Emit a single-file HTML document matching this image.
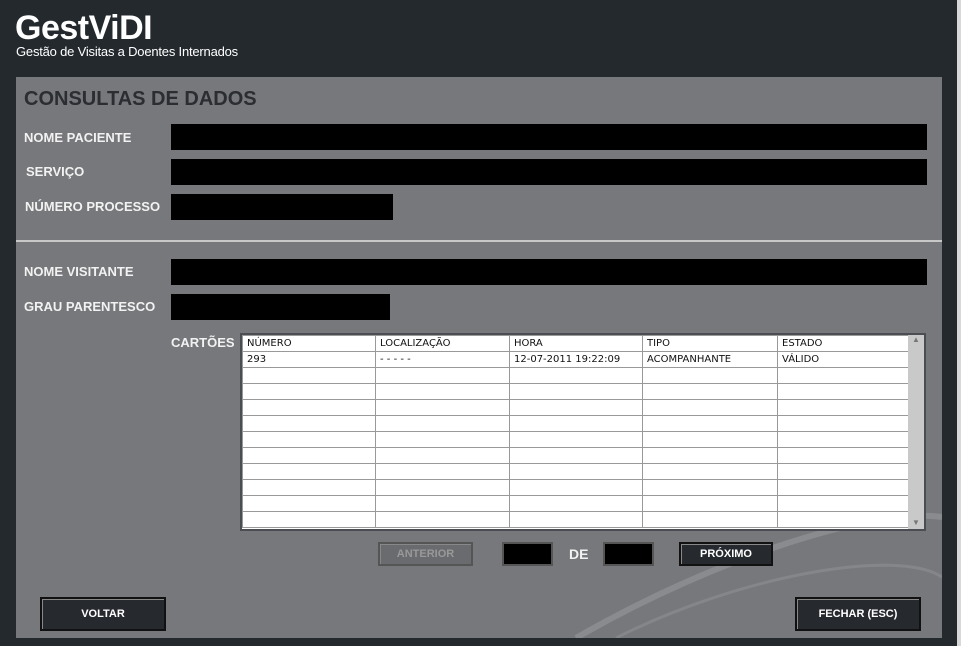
<!DOCTYPE html><html><head><meta charset="utf-8"><style>
body{margin:0;width:961px;height:646px;background:#24292e;font-family:"Liberation Sans",sans-serif;position:relative;overflow:hidden}
.a{position:absolute}
.lbl{position:absolute;color:#f2f2f2;font-weight:bold;font-size:13px}
.blk{position:absolute;background:#000}
.btn{position:absolute;background:#262a2f;border:2px solid #111;box-shadow:inset 1px 1px 0 #888;color:#fff;font-weight:bold;font-size:11px;text-align:center;box-sizing:border-box}
table{border-collapse:collapse;font-size:10px;font-family:"DejaVu Sans",sans-serif;}
td{border:1px solid #999;height:15px;padding:0 0 0 4px;line-height:14px;color:#111;white-space:nowrap}
</style></head><body>
<div class="a" style="left:15px;top:9px;color:#fff;font-weight:bold;font-size:34px;letter-spacing:-0.5px">GestViDI</div>
<div class="a" style="left:16px;top:44px;color:#fff;font-size:13px;letter-spacing:-0.2px">Gestão de Visitas a Doentes Internados</div>
<div class="a" style="left:16px;top:77px;width:926px;height:561px;background:#77787b;overflow:hidden">
<svg class="a" style="left:0;top:0" width="926" height="561"><path d="M560 561 C700 480 860 430 926 440" stroke="#8a8b8e" stroke-width="6" fill="none"/><path d="M600 561 C720 500 880 470 926 500" stroke="#858689" stroke-width="3" fill="none"/></svg>
</div>
<div class="a" style="left:24px;top:88px;color:#2a2d32;font-weight:bold;font-size:20px">CONSULTAS DE DADOS</div>
<div class="lbl" style="left:24px;top:130px">NOME PACIENTE</div>
<div class="blk" style="left:171px;top:124px;width:756px;height:26px"></div>
<div class="lbl" style="left:26px;top:164px">SERVIÇO</div>
<div class="blk" style="left:171px;top:159px;width:756px;height:26px"></div>
<div class="lbl" style="left:25px;top:199px">NÚMERO PROCESSO</div>
<div class="blk" style="left:171px;top:194px;width:222px;height:26px"></div>
<div class="a" style="left:16px;top:240px;width:926px;height:2px;background:#c8c8c8"></div>
<div class="lbl" style="left:24px;top:264px">NOME VISITANTE</div>
<div class="blk" style="left:171px;top:259px;width:756px;height:26px"></div>
<div class="lbl" style="left:24px;top:299px">GRAU PARENTESCO</div>
<div class="blk" style="left:171px;top:294px;width:219px;height:26px"></div>
<div class="lbl" style="left:171px;top:335px">CARTÕES</div>
<div class="a" style="left:240px;top:333px;width:686px;height:198px;background:#fff;border:2px solid #4a4d52;box-sizing:border-box;overflow:hidden">
<table style="width:667px">
<tr><td style="width:128px">NÚMERO</td><td style="width:129px">LOCALIZAÇÃO</td><td style="width:128px">HORA</td><td style="width:130px">TIPO</td><td>ESTADO</td></tr>
<tr><td>293</td><td>- - - - -</td><td>12-07-2011 19:22:09</td><td>ACOMPANHANTE</td><td>VÁLIDO</td></tr>
<tr><td></td><td></td><td></td><td></td><td></td></tr><tr><td></td><td></td><td></td><td></td><td></td></tr>
<tr><td></td><td></td><td></td><td></td><td></td></tr><tr><td></td><td></td><td></td><td></td><td></td></tr>
<tr><td></td><td></td><td></td><td></td><td></td></tr><tr><td></td><td></td><td></td><td></td><td></td></tr>
<tr><td></td><td></td><td></td><td></td><td></td></tr><tr><td></td><td></td><td></td><td></td><td></td></tr>
<tr><td></td><td></td><td></td><td></td><td></td></tr><tr><td></td><td></td><td></td><td></td><td></td></tr>
</table>
<div class="a" style="right:0;top:0;width:16px;height:194px;background:#c9c9c9"><div style="font-size:8px;color:#777;text-align:center">▲</div><div style="position:absolute;bottom:2px;width:16px;font-size:8px;color:#777;text-align:center">▼</div></div>
</div>
<div class="btn" style="left:378px;top:542px;width:95px;height:24px;background:#6a6b6e;color:#999;border-color:#555;line-height:20px">ANTERIOR</div>
<div class="blk" style="left:502px;top:542px;width:51px;height:24px;border:2px solid #555;box-sizing:border-box"></div>
<div class="lbl" style="left:569px;top:546px;font-size:14px">DE</div>
<div class="blk" style="left:603px;top:542px;width:51px;height:24px;border:2px solid #555;box-sizing:border-box"></div>
<div class="btn" style="left:679px;top:542px;width:94px;height:24px;line-height:20px">PRÓXIMO</div>
<div class="btn" style="left:40px;top:597px;width:126px;height:34px;line-height:30px">VOLTAR</div>
<div class="btn" style="left:795px;top:597px;width:126px;height:34px;line-height:30px">FECHAR (ESC)</div>
<div class="a" style="left:957px;top:0;width:4px;height:646px;background:#d8d8d8"></div>
</body></html>
